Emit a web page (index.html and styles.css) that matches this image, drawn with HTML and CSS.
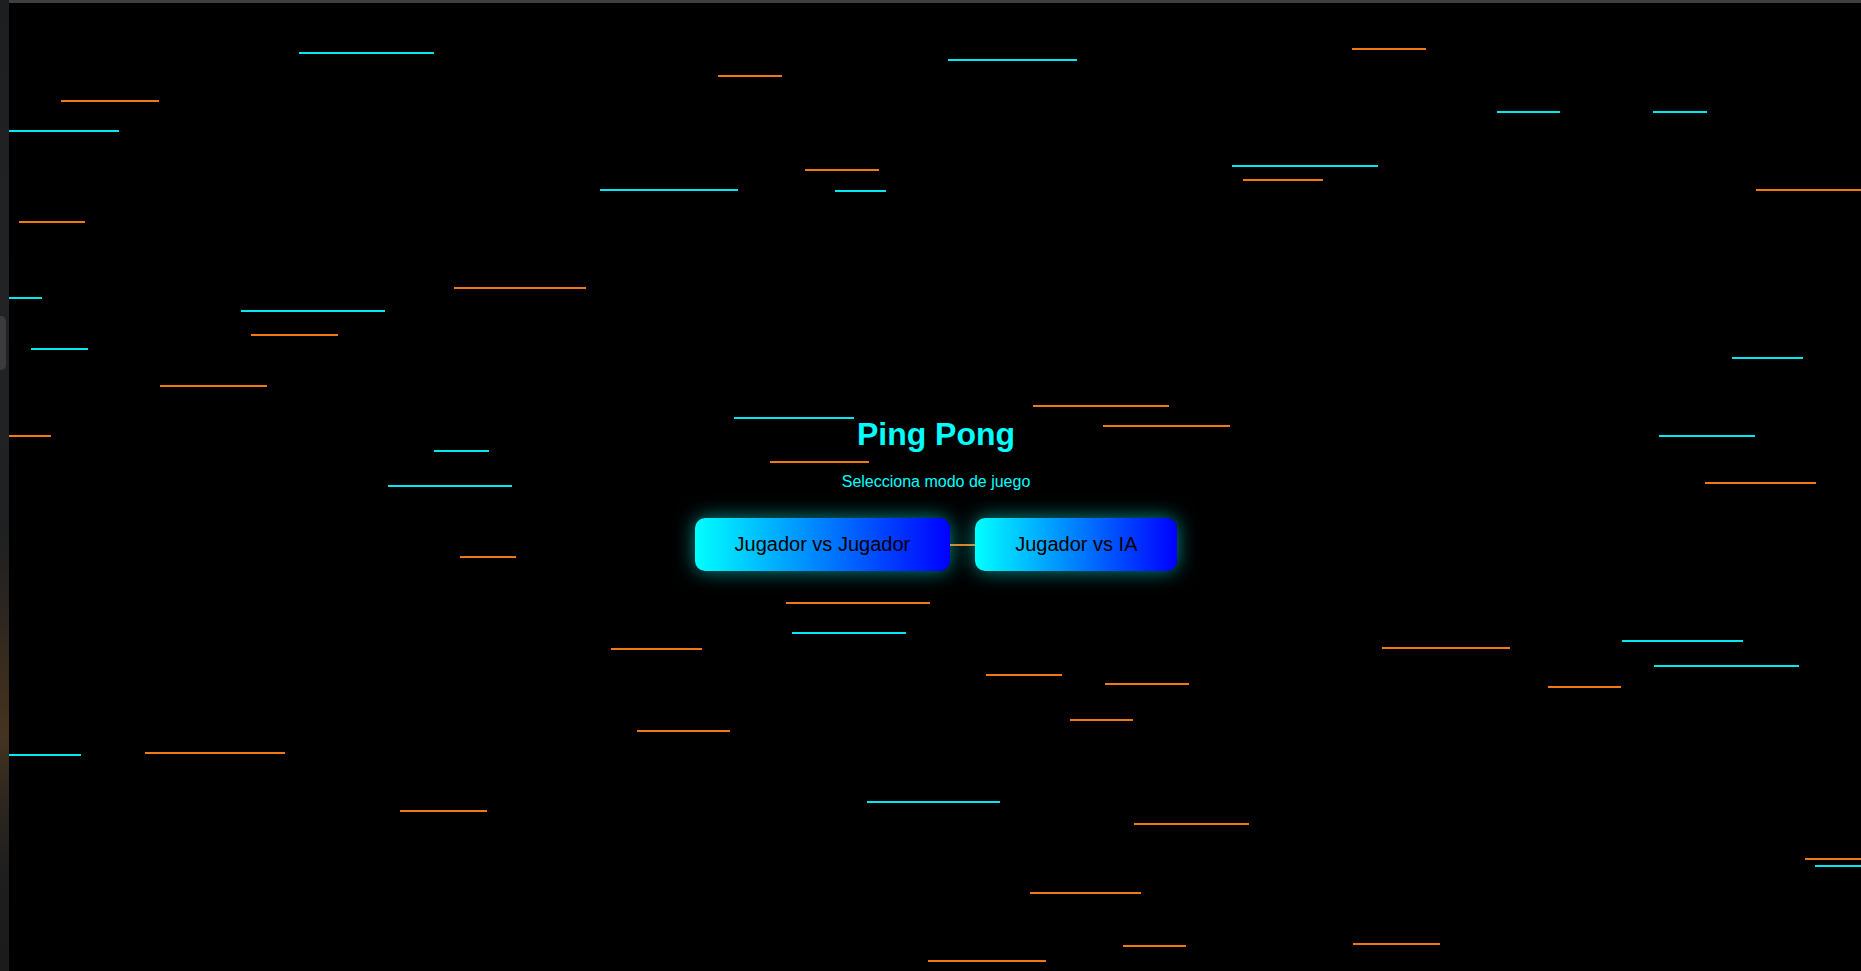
FILE: index.html
```html
<!DOCTYPE html>
<html lang="es">
<head>
<meta charset="utf-8">
<title>Ping Pong</title>
<link rel="stylesheet" href="styles.css">
</head>
<body>
<div class="desktop">
  <aside class="wallpaper-strip"><span class="dock-handle"></span></aside>
  <div class="window">
    <div class="window-top"></div>
    <main class="stage">
      <div class="lines" aria-hidden="true">
        <span class="line cyan" style="left:290px;top:49px;width:135px"></span>
        <span class="line orange" style="left:52px;top:97px;width:98px"></span>
        <span class="line cyan" style="left:0px;top:127px;width:110px"></span>
        <span class="line cyan" style="left:591px;top:186px;width:138px"></span>
        <span class="line orange" style="left:10px;top:218px;width:66px"></span>
        <span class="line orange" style="left:445px;top:284px;width:132px"></span>
        <span class="line cyan" style="left:0px;top:294px;width:33px"></span>
        <span class="line cyan" style="left:232px;top:307px;width:144px"></span>
        <span class="line orange" style="left:242px;top:331px;width:87px"></span>
        <span class="line cyan" style="left:22px;top:345px;width:57px"></span>
        <span class="line orange" style="left:151px;top:382px;width:107px"></span>
        <span class="line orange" style="left:0px;top:432px;width:42px"></span>
        <span class="line cyan" style="left:425px;top:447px;width:55px"></span>
        <span class="line cyan" style="left:379px;top:482px;width:124px"></span>
        <span class="line orange" style="left:709px;top:72px;width:64px"></span>
        <span class="line cyan" style="left:939px;top:56px;width:129px"></span>
        <span class="line orange" style="left:796px;top:166px;width:74px"></span>
        <span class="line cyan" style="left:826px;top:187px;width:51px"></span>
        <span class="line cyan" style="left:1223px;top:162px;width:146px"></span>
        <span class="line cyan" style="left:725px;top:414px;width:120px"></span>
        <span class="line orange" style="left:1024px;top:402px;width:136px"></span>
        <span class="line orange" style="left:1094px;top:422px;width:127px"></span>
        <span class="line orange" style="left:761px;top:458px;width:99px"></span>
        <span class="line orange" style="left:1343px;top:45px;width:74px"></span>
        <span class="line cyan" style="left:1488px;top:108px;width:63px"></span>
        <span class="line cyan" style="left:1644px;top:108px;width:54px"></span>
        <span class="line orange" style="left:1234px;top:176px;width:80px"></span>
        <span class="line orange" style="left:1747px;top:186px;width:105px"></span>
        <span class="line cyan" style="left:1723px;top:354px;width:71px"></span>
        <span class="line cyan" style="left:1650px;top:432px;width:96px"></span>
        <span class="line orange" style="left:1696px;top:479px;width:111px"></span>
        <span class="line orange" style="left:451px;top:553px;width:56px"></span>
        <span class="line orange" style="left:602px;top:645px;width:91px"></span>
        <span class="line cyan" style="left:0px;top:751px;width:72px"></span>
        <span class="line orange" style="left:136px;top:749px;width:140px"></span>
        <span class="line orange" style="left:391px;top:807px;width:87px"></span>
        <span class="line orange" style="left:777px;top:599px;width:144px"></span>
        <span class="line cyan" style="left:783px;top:629px;width:114px"></span>
        <span class="line orange" style="left:977px;top:671px;width:76px"></span>
        <span class="line orange" style="left:1096px;top:680px;width:84px"></span>
        <span class="line orange" style="left:1061px;top:716px;width:63px"></span>
        <span class="line orange" style="left:628px;top:727px;width:93px"></span>
        <span class="line cyan" style="left:858px;top:798px;width:133px"></span>
        <span class="line orange" style="left:1125px;top:820px;width:115px"></span>
        <span class="line orange" style="left:1021px;top:889px;width:111px"></span>
        <span class="line orange" style="left:1114px;top:942px;width:63px"></span>
        <span class="line orange" style="left:919px;top:957px;width:118px"></span>
        <span class="line orange" style="left:1373px;top:644px;width:128px"></span>
        <span class="line cyan" style="left:1613px;top:637px;width:121px"></span>
        <span class="line cyan" style="left:1645px;top:662px;width:145px"></span>
        <span class="line orange" style="left:1539px;top:683px;width:73px"></span>
        <span class="line orange" style="left:1796px;top:855px;width:56px"></span>
        <span class="line cyan" style="left:1806px;top:862px;width:46px"></span>
        <span class="line orange" style="left:1344px;top:940px;width:87px"></span>
        <span class="line orange" style="left:891px;top:541px;width:100px"></span>
      </div>
      <section class="menu">
        <h1 class="menu-title">Ping Pong</h1>
        <p class="menu-subtitle">Selecciona modo de juego</p>
        <div class="menu-buttons">
          <button class="mode-btn" type="button">Jugador vs Jugador</button>
          <button class="mode-btn" type="button">Jugador vs IA</button>
        </div>
      </section>
    </main>
  </div>
</div>
</body>
</html>
```

FILE: styles.css
```css
* { box-sizing: border-box; }

html, body {
  margin: 0;
  padding: 0;
  width: 100%;
  height: 100%;
  background: #000;
  overflow: hidden;
  font-family: "Liberation Sans", Arial, sans-serif;
}

.desktop {
  display: flex;
  width: 1861px;
  height: 971px;
}

.wallpaper-strip {
  position: relative;
  flex: 0 0 9px;
  height: 100%;
  background: linear-gradient(180deg,
    #1d1e20 0%,
    #222324 30%,
    #1f2021 55%,
    #2a2520 62%,
    #3b2d1d 70%,
    #44331f 76%,
    #2e2720 82%,
    #1e1e1e 90%,
    #1b1b1b 100%);
}

.dock-handle {
  position: absolute;
  left: -4px;
  top: 316px;
  width: 10px;
  height: 54px;
  border-radius: 5px;
  background: #3b3b3d;
}

.window {
  flex: 1 1 auto;
  display: flex;
  flex-direction: column;
  min-width: 0;
}

.window-top {
  flex: 0 0 3px;
  background: #3f3f42;
}

.stage {
  position: relative;
  flex: 1 1 auto;
  overflow: hidden;
  background: #000;
  display: flex;
  flex-direction: column;
  align-items: center;
  padding-top: 413px;
}

.lines {
  position: absolute;
  inset: 0;
  z-index: 0;
}

.line {
  position: absolute;
  height: 2px;
}

.line.cyan { background: #00e8f0; }
.line.orange { background: #f27812; }

.menu {
  position: relative;
  z-index: 1;
  display: flex;
  flex-direction: column;
  align-items: center;
  margin-left: 2px;
}

.menu-title {
  margin: 0;
  font-size: 32px;
  font-weight: 700;
  line-height: 37px;
  color: #00ffff;
}

.menu-subtitle {
  margin: 20px 0 0;
  font-size: 16px;
  line-height: 18px;
  color: #00ffff;
}

.menu-buttons {
  display: flex;
  gap: 25px;
  margin-top: 27px;
}

.mode-btn {
  padding: 15px 40px;
  border: none;
  border-radius: 10px;
  font-family: "Liberation Sans", Arial, sans-serif;
  font-size: 20px;
  line-height: 23px;
  color: #000;
  background: linear-gradient(90deg, #00ffff 0%, #0000ff 100%);
  box-shadow: 0 0 20px rgba(0, 255, 255, 0.55);
  cursor: pointer;
}
```
